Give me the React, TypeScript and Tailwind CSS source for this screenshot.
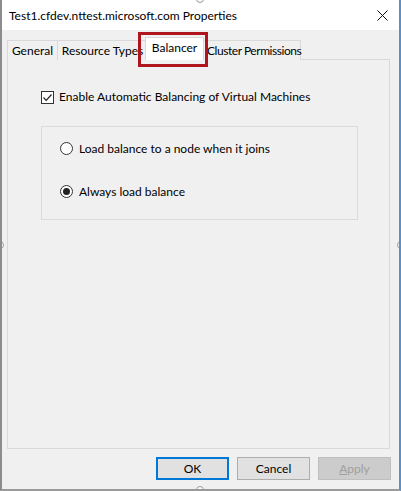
import React from 'react';

const CloseIcon: React.FC = () => (
  <svg width="11" height="11" viewBox="0 0 11 11" className="block">
    <path d="M0.5 0.5 L10.5 10.5 M10.5 0.5 L0.5 10.5" stroke="#111" strokeWidth="1" fill="none" />
  </svg>
);

const Checkbox: React.FC<{ checked: boolean }> = ({ checked }) => (
  <span className="w-[13px] h-[13px] border border-[#333] bg-white flex items-center justify-center shrink-0">
    {checked && (
      <svg width="11" height="11" viewBox="0 0 11 11">
        <path d="M1.5 5.5 L4.2 8.3 L9.5 2.5" stroke="#222" strokeWidth="1.2" fill="none" />
      </svg>
    )}
  </span>
);

const Radio: React.FC<{ checked: boolean }> = ({ checked }) => (
  <span className="w-[13px] h-[13px] rounded-full border border-[#333] bg-white flex items-center justify-center shrink-0">
    {checked && <span className="w-[7px] h-[7px] rounded-full bg-[#222]" />}
  </span>
);

const Tab: React.FC<{ label: string; w: string; selected?: boolean; className?: string }> = ({ label, w, selected, className }) => (
  <div
    className={`${w} ${className ?? 'justify-center'} flex items-center border border-b-0 border-[#d9d9d9] whitespace-nowrap ${
      selected ? 'h-[23px] bg-white z-10 pb-[3px]' : 'h-[20px] bg-[#f0f0f0]'
    }`}
  >
    {label}
  </div>
);

const Handle: React.FC<{ className: string }> = ({ className }) => (
  <span className={`absolute w-[8px] h-[8px] rounded-full bg-white border border-[#999] ${className}`} />
);

const App: React.FC = () => {
  return (
    <div className="relative w-[401px] h-[491px] bg-[#f0f0f0] flex flex-col border-l-2 border-l-[#8c8c8c] border-r-2 border-r-[#5a8fc8] border-b-2 border-b-[#9a9a9a] text-[12px] text-black font-['Lato','Liberation_Sans',sans-serif] overflow-hidden">
      {/* title bar */}
      <div className="h-[30px] bg-white flex items-center justify-between pl-[7px] pr-[11px] shrink-0">
        <span className="text-[12px] pt-[1px]">Test1.cfdev.nttest.microsoft.com Properties</span>
        <CloseIcon />
      </div>

      {/* tabs + page */}
      <div className="flex-1 flex flex-col pl-[5px] pr-[9px] pt-[8px]">
        <div className="flex items-end h-[22px] shrink-0 relative">
          <Tab label="General" w="w-[51px]" />
          <Tab label="Resource Types" w="w-[91px]" className="-ml-px justify-center overflow-hidden" />
          <Tab label="Balancer" w="w-[59px]" selected className="-ml-[3px] justify-center" />
          <Tab label="Cluster Permissions" w="w-[100px]" className="-ml-[3px] justify-start pl-[5px] tracking-[-0.45px]" />
        </div>
        <div className="flex-1 border border-[#d9d9d9] -mt-px bg-[#f0f0f0] pl-[33px] pr-[31px] pt-[30px] flex flex-col">
          <label className="flex items-center gap-[5px] h-[14px]">
            <Checkbox checked />
            <span>Enable Automatic Balancing of Virtual Machines</span>
          </label>
          <div className="mt-[22px] h-[94px] border border-[#dcdcdc] pl-[18px] pt-[15px] flex flex-col">
            <label className="flex items-center gap-[6px] h-[13px]">
              <Radio checked={false} />
              <span>Load balance to a node when it joins</span>
            </label>
            <label className="flex items-center gap-[6px] h-[13px] mt-[30px]">
              <Radio checked />
              <span>Always load balance</span>
            </label>
          </div>
        </div>
      </div>

      {/* buttons */}
      <div className="h-[40px] shrink-0 flex justify-end items-start pt-[8px] pr-[8px] gap-[8px]">
        <button className="w-[73px] h-[23px] bg-[#e1e1e1] border-2 border-[#0078d7] flex items-center justify-center">OK</button>
        <button className="w-[73px] h-[23px] bg-[#e1e1e1] border border-[#adadad] flex items-center justify-center">Cancel</button>
        <button disabled className="w-[73px] h-[23px] bg-[#cccccc] border border-[#bfbfbf] text-[#a0a0a0] flex items-center justify-center">
          <span><span className="underline">A</span>pply</span>
        </button>
      </div>

      {/* annotation highlight around selected tab */}
      <div className="absolute left-[136px] top-[32px] w-[70px] h-[35px] border-[3px] border-[#b0141c] z-20 pointer-events-none" />

      {/* screenshot resize handles */}
      <Handle className="left-[194px] -top-[5px]" />
      <Handle className="-left-[6px] top-[241px]" />
      <Handle className="-right-[6px] top-[241px]" />
      <Handle className="left-[194px] -bottom-[5px]" />
    </div>
  );
};

export default App;
